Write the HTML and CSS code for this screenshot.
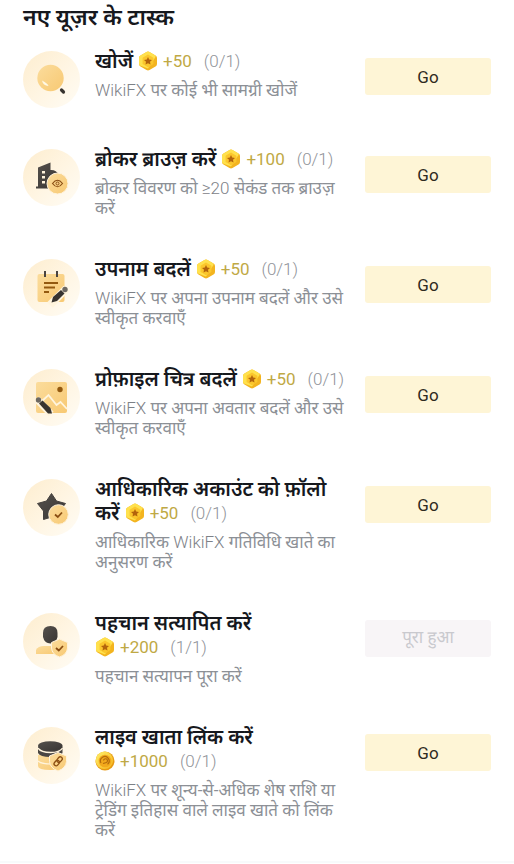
FILE: index.html
```
<!DOCTYPE html>
<html lang="hi">
<head>
<meta charset="utf-8">
<meta name="viewport" content="width=device-width, initial-scale=1">
<title>नए यूज़र के टास्क</title>
<link rel="stylesheet" href="styles.css">
</head>
<body>
<svg class="defs" aria-hidden="true">
  <defs>
    <linearGradient id="disc" x1="0" y1="0" x2="1" y2="1"><stop offset="0" stop-color="#fdedcf"/><stop offset=".5" stop-color="#fff5e2"/><stop offset="1" stop-color="#fffcf5"/></linearGradient>
    <linearGradient id="gold" x1="0" y1="0" x2="1" y2="1"><stop offset="0" stop-color="#fbdc9c"/><stop offset="1" stop-color="#f8c973"/></linearGradient>
    <linearGradient id="dark" x1="0" y1="0" x2="1" y2="1"><stop offset="0" stop-color="#55514d"/><stop offset="1" stop-color="#383533"/></linearGradient>
    <linearGradient id="coinface" x1="0" y1="0" x2="1" y2="1"><stop offset="0" stop-color="#fff06a"/><stop offset="1" stop-color="#f5b31c"/></linearGradient>
    <symbol id="coin" viewBox="0 0 20 20">
      <path d="M8.500 1Q10 .2 11.500 1L17.500 4.400Q19 5.200 19 7V13Q19 14.800 17.500 15.600L11.500 19Q10 19.800 8.500 19L2.500 15.600Q1 14.800 1 13V7Q1 5.200 2.500 4.400Z" fill="#f3b41f"/>
      <path d="M8.500 1Q10 .2 11.500 1L17 4.200Q18 5 17.500 6L10 17.500L2 14.500Q1 14 1 12.500V7Q1 5.200 2.500 4.400Z" fill="#ffe14d"/>
      <path d="M10 3.600L15.400 6.700V13L10 16.200L4.600 13V6.700Z" fill="#fbc62c"/>
      <path d="M10 6L11.200 8.600L14 8.900L12 10.800L12.500 13.500L10 12.200L7.500 13.500L8 10.800L6 8.900L8.800 8.600Z" fill="#b3640c"/>
    </symbol>
    <symbol id="coin-round" viewBox="0 0 20 20">
      <circle cx="10" cy="10" r="9.500" fill="#e79a12"/>
      <circle cx="9.400" cy="9.300" r="8.700" fill="url(#coinface)"/>
      <circle cx="10" cy="10" r="6.300" fill="#f2a91c"/>
      <path d="M6 12A4.300 4.300 0 1 1 12.500 13.300M8 12.500L11.500 11.500A2 2 0 1 0 8.500 9.500" fill="none" stroke="#b36b0c" stroke-width="1.200"/>
    </symbol>
  </defs>
</svg>
<main class="page">
  <h1 class="page-title">नए यूज़र के टास्क</h1>
  <ul class="tasks">
    <li class="task">
      <svg class="task-icon" viewBox="0 0 57 57" aria-hidden="true">
        <circle cx="28.500" cy="28.500" r="28.500" fill="url(#disc)"/>
        <path d="M38.500 39L40.500 41" stroke="#37332f" stroke-width="3.200" stroke-linecap="round"/>
        <circle cx="27.500" cy="27" r="13.200" fill="url(#gold)"/>
        <path d="M19 29.500Q20 34.500 25.500 35Q25 32.500 19 29.500Z" fill="#fff8e5"/>
      </svg>
      <div class="task-text">
        <h2 class="task-title">खोजें <span class="reward"><svg class="coin" aria-hidden="true"><use href="#coin"/></svg><span class="points">+50</span><span class="count">(0/1)</span></span></h2>
        <p class="task-desc"><span class="latin">WikiFX</span> पर कोई भी सामग्री खोजें</p>
      </div>
      <button class="action" type="button">Go</button>
    </li>
    <li class="task">
      <svg class="task-icon" viewBox="0 0 57 57" aria-hidden="true">
        <circle cx="28.500" cy="28.500" r="28.500" fill="url(#disc)"/>
        <path d="M15 18.500L27.500 13.500V21Q33 20.500 36 26V39.500H13V37.500H15Z" fill="url(#dark)"/>
        <path d="M19 22H22V24.500H19ZM19 27H22V29.500H19ZM19 32H22V34.500H19Z" fill="#fff3dc"/>
        <circle cx="34.500" cy="34.500" r="10.500" fill="url(#gold)" stroke="#fff3dc" stroke-width="1"/>
        <path d="M29.500 34.500Q34.500 28 39.500 34.500Q34.500 41 29.500 34.500Z" fill="none" stroke="#8a4e13" stroke-width="1.200"/>
        <circle cx="34.500" cy="34.500" r="1.500" fill="none" stroke="#8a4e13"/>
      </svg>
      <div class="task-text">
        <h2 class="task-title">ब्रोकर ब्राउज़ करें <span class="reward"><svg class="coin" aria-hidden="true"><use href="#coin"/></svg><span class="points">+100</span><span class="count">(0/1)</span></span></h2>
        <p class="task-desc">ब्रोकर विवरण को <span class="latin">≥20</span> सेकंड तक ब्राउज़ करें</p>
      </div>
      <button class="action" type="button">Go</button>
    </li>
    <li class="task">
      <svg class="task-icon" viewBox="0 0 57 57" aria-hidden="true">
        <circle cx="28.500" cy="28.500" r="28.500" fill="url(#disc)"/>
        <rect x="14.500" y="15" width="27" height="28" rx="2" fill="url(#gold)"/>
        <path d="M22 12V18M34 12V18" stroke="#4a4440" stroke-width="2"/>
        <path d="M21 24H35M21 28.500H32M21 33H26" stroke="#93590f" stroke-width="2"/>
        <path d="M27 46L43.500 29.500" stroke="#fff4dd" stroke-width="8"/>
        <path d="M28.500 43.500L30 38L38 31L41.500 34.500L34 42Z" fill="#37332f"/>
        <circle cx="42" cy="30.500" r="2.700" fill="#6d6862"/>
      </svg>
      <div class="task-text">
        <h2 class="task-title">उपनाम बदलें <span class="reward"><svg class="coin" aria-hidden="true"><use href="#coin"/></svg><span class="points">+50</span><span class="count">(0/1)</span></span></h2>
        <p class="task-desc"><span class="latin">WikiFX</span> पर अपना उपनाम बदलें और उसे स्वीकृत करवाएँ</p>
      </div>
      <button class="action" type="button">Go</button>
    </li>
    <li class="task">
      <svg class="task-icon" viewBox="0 0 57 57" aria-hidden="true">
        <circle cx="28.500" cy="28.500" r="28.500" fill="url(#disc)"/>
        <rect x="13" y="13" width="31" height="31" rx="2" fill="url(#gold)"/>
        <circle cx="37" cy="20.500" r="2.700" fill="#93590f"/>
        <path d="M18 33L25.500 26L33.500 36L37.500 33L44 40" fill="none" stroke="#fff4dd" stroke-width="1.800"/>
        <path d="M13.500 30L28 45" stroke="#fff4dd" stroke-width="7"/>
        <path d="M16 34.500L19.500 31.500L27.500 39L29 44.500H25Z" fill="#37332f"/>
        <circle cx="15.500" cy="31" r="2.700" fill="#6d6862"/>
      </svg>
      <div class="task-text">
        <h2 class="task-title">प्रोफ़ाइल चित्र बदलें <span class="reward"><svg class="coin" aria-hidden="true"><use href="#coin"/></svg><span class="points">+50</span><span class="count">(0/1)</span></span></h2>
        <p class="task-desc"><span class="latin">WikiFX</span> पर अपना अवतार बदलें और उसे स्वीकृत करवाएँ</p>
      </div>
      <button class="action" type="button">Go</button>
    </li>
    <li class="task">
      <svg class="task-icon" viewBox="0 0 57 57" aria-hidden="true">
        <circle cx="28.500" cy="28.500" r="28.500" fill="url(#disc)"/>
        <path d="M28.500 14.500L33.500 22L42.500 24.500L37 31.500V40L28.500 38L20.500 40.500V32L14.500 24.500L23.500 22Z" fill="url(#dark)" stroke="#45413e" stroke-linejoin="round"/>
        <circle cx="35.500" cy="35.500" r="9.800" fill="url(#gold)" stroke="#fff3dc" stroke-width="1"/>
        <path d="M32 35.500L34.800 38L39 33.500" fill="none" stroke="#8a4e13" stroke-width="1.800"/>
      </svg>
      <div class="task-text">
        <h2 class="task-title">आधिकारिक अकाउंट को फ़ॉलो करें <span class="reward"><svg class="coin" aria-hidden="true"><use href="#coin"/></svg><span class="points">+50</span><span class="count">(0/1)</span></span></h2>
        <p class="task-desc">आधिकारिक <span class="latin">WikiFX</span> गतिविधि खाते का अनुसरण करें</p>
      </div>
      <button class="action" type="button">Go</button>
    </li>
    <li class="task">
      <svg class="task-icon" viewBox="0 0 57 57" aria-hidden="true">
        <circle cx="28.500" cy="28.500" r="28.500" fill="url(#disc)"/>
        <path d="M13 41V37Q15 33 21 33H35V41Z" fill="url(#gold)"/>
        <path d="M20 20Q20 13 27.500 13Q34.500 13 34.500 20V24Q33 30.500 27.500 30.500Q21.500 30.500 20 24Z" fill="url(#dark)"/>
        <path d="M28.500 29.500L36.500 26L44.500 29.500V35Q44 41.500 36.500 44Q29 41.500 28.500 35Z" fill="url(#gold)" stroke="#fff3dc" stroke-width="1"/>
        <path d="M33 35L35.800 37.500L40 33" fill="none" stroke="#8a4e13" stroke-width="1.800"/>
      </svg>
      <div class="task-text">
        <h2 class="task-title">पहचान सत्यापित करें <span class="reward"><svg class="coin" aria-hidden="true"><use href="#coin"/></svg><span class="points">+200</span><span class="count">(1/1)</span></span></h2>
        <p class="task-desc">पहचान सत्यापन पूरा करें</p>
      </div>
      <button class="action" type="button" disabled>पूरा हुआ</button>
    </li>
    <li class="task">
      <svg class="task-icon" viewBox="0 0 57 57" aria-hidden="true">
        <circle cx="28.500" cy="28.500" r="28.500" fill="url(#disc)"/>
        <path d="M15 28V39Q15 43 27.500 43Q38 43 38 39V28Z" fill="url(#gold)"/>
        <path d="M15 34Q18 37 28 37" fill="none" stroke="#fff4dd" stroke-width="1.200"/>
        <path d="M15 20V26Q17 30 27.500 30Q38 30 39.500 26V20Z" fill="#4a4643"/>
        <path d="M15 21Q18 25.500 27.500 25.500Q37 25.500 39.500 21" fill="none" stroke="#fff4dd" stroke-width="1.400"/>
        <ellipse cx="27.300" cy="19" rx="12.300" ry="4.800" fill="url(#dark)"/>
        <path d="M26.500 29L35 25.500L43.500 29V34.500Q43 41 35 44Q27 41 26.500 34.500Z" fill="url(#gold)" stroke="#fff3dc" stroke-width="1"/>
        <g transform="rotate(-50 35 34.500)" fill="none" stroke="#8a4e13" stroke-width="1.300"><rect x="30" y="32.500" width="6" height="4" rx="2"/><rect x="34.500" y="32.500" width="6" height="4" rx="2"/></g>
      </svg>
      <div class="task-text">
        <h2 class="task-title">लाइव खाता लिंक करें <span class="reward"><svg class="coin" aria-hidden="true"><use href="#coin-round"/></svg><span class="points">+1000</span><span class="count">(0/1)</span></span></h2>
        <p class="task-desc"><span class="latin">WikiFX</span> पर शून्य-से-अधिक शेष राशि या ट्रेडिंग इतिहास वाले लाइव खाते को लिंक करें</p>
      </div>
      <button class="action" type="button">Go</button>
    </li>
  </ul>
</main>
</body>
</html>
```
FILE: styles.css
```
* { box-sizing: border-box; }
body {
  margin: 0;
  background: #fff;
  color: #16181d;
  font-family: Roboto, "Noto Sans Devanagari", "Noto Sans", sans-serif;
}
.defs { position: absolute; width: 0; height: 0; }
.page {
  padding: 0 23px 21px;
  border-bottom: 2px solid #f8fafb;
}
.page-title {
  margin: 0;
  padding: 4px 0 17px;
  font-size: 23px;
  line-height: 28px;
  font-weight: 600;
}
.tasks {
  display: grid;
  gap: 39px;
  margin: 0;
  padding: 0;
  list-style: none;
}
.task {
  display: grid;
  grid-template-columns: 57px 1fr 126px;
  column-gap: 15px;
  align-items: start;
}
.task-icon { width: 57px; height: 57px; margin-top: 2px; }
.task-title {
  margin: 0 0 7px;
  font-size: 20px;
  line-height: 24px;
  font-weight: 600;
}
.reward {
  display: inline-flex;
  align-items: center;
  height: 24px;
  vertical-align: top;
  white-space: nowrap;
  font-size: 17px;
}
.coin { width: 20px; height: 20px; margin-right: 5px; }
.points { margin-right: 12px; color: #bfa945; font-weight: 400; }
.count { color: #909399; font-weight: 300; }
.task-desc {
  margin: 0;
  color: #8c9096;
  font-size: 17px;
  line-height: 20px;
  font-weight: 400;
}
.latin { font-weight: 300; color: #7d8187; }
.action {
  height: 37px;
  margin: 9px 0 0;
  padding: 0;
  border: 0;
  border-radius: 3px;
  background: #fef5d6;
  color: #2e2a22;
  font: 400 17px Roboto, "Noto Sans Devanagari", "Noto Sans", sans-serif;
}
.action:disabled { background: #f8f5f7; color: #c9c9ce; }
```
